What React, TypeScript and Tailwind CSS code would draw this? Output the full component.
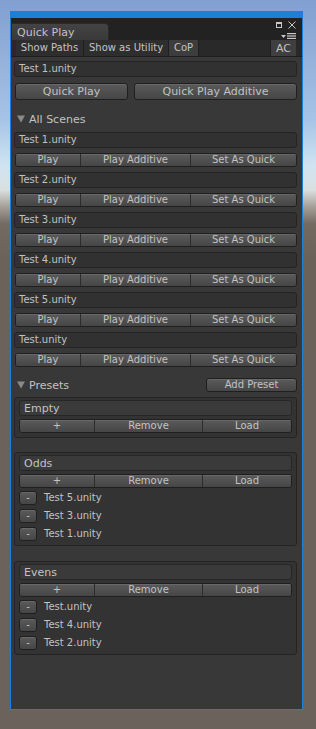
import React from "react";

const txt = "text-[#c2c2c2]";

function Btn({ children, className = "" }: { children?: React.ReactNode; className?: string }) {
  return (
    <div
      className={`flex items-center justify-center rounded-[3px] border border-[#1f1f1f] bg-gradient-to-b from-[#5a5a5a] to-[#464646] ${txt} text-[10px] leading-none shadow-[inset_0_1px_0_#686868] ${className}`}
    >
      {children}
    </div>
  );
}

function Seg({ items, widths, className = "" }: { items: string[]; widths: string[]; className?: string }) {
  return (
    <div className={`flex rounded-[3px] border border-[#1f1f1f] overflow-hidden ${className}`}>
      {items.map((it, i) => (
        <div
          key={i}
          className={`flex items-center justify-center bg-gradient-to-b from-[#5a5a5a] to-[#464646] shadow-[inset_0_1px_0_#686868] ${txt} text-[10px] leading-none ${i > 0 ? "border-l border-[#2c2c2c]" : ""} ${widths[i]}`}
        >
          {it}
        </div>
      ))}
    </div>
  );
}

function Field({ children, className = "" }: { children?: React.ReactNode; className?: string }) {
  return (
    <div className={`flex items-center rounded-[3px] border pl-[4px] ${txt} leading-none ${className}`}>
      {children}
    </div>
  );
}

function Tri() {
  return (
    <svg width="8" height="8" viewBox="0 0 8 8" className="block">
      <polygon points="0,0.5 8,0.5 4,7.5" fill="#8a8a8a" />
    </svg>
  );
}

function SceneRow({ name }: { name: string }) {
  return (
    <div className="flex flex-col">
      <Field className="ml-[3px] mr-[5px] h-[16px] text-[10px] border-[#232323] bg-[#313131]">{name}</Field>
      <Seg
        className="ml-[4px] mr-[5px] mt-[5px] mb-[5px] h-[14px]"
        items={["Play", "Play Additive", "Set As Quick"]}
        widths={["w-[64px]", "w-[110px]", "flex-1"]}
      />
    </div>
  );
}

function Preset({ name, items, className = "" }: { name: string; items: string[]; className?: string }) {
  return (
    <div
      className={`ml-[3px] mr-[5px] flex flex-col rounded-[3px] border border-[#232323] bg-[#333333] px-[4px] pt-[2px] pb-[4px] ${className}`}
    >
      <Field className="h-[16px] text-[11px] rounded-[2px] border-[#262626] bg-[#3a3a3a]">{name}</Field>
      <Seg
        className="mt-[3px] h-[14px]"
        items={["+", "Remove", "Load"]}
        widths={["w-[74px]", "w-[108px]", "flex-1"]}
      />
      {items.length > 0 && (
        <div className="mt-[3px] flex flex-col gap-[4px]">
          {items.map((it) => (
            <div key={it} className="flex items-center h-[14px]">
              <Btn className="w-[18px] h-[14px]">-</Btn>
              <span className={`ml-[7px] text-[10px] leading-none ${txt}`}>{it}</span>
            </div>
          ))}
        </div>
      )}
    </div>
  );
}

export default function App() {
  return (
    <div className="w-[316px] h-[729px] overflow-hidden pt-[11px] pl-[10px] font-['DejaVu_Sans',sans-serif] bg-[linear-gradient(180deg,#819fd0_0px,#a6c4e6_120px,#cfe4f2_165px,#dadfe0_190px,#a29b94_208px,#736a62_224px,#6b625a_260px,#6a625b_729px)]">
      <div className="w-[293px] h-[699px] flex flex-col border-x border-b border-t-[7px] border-[#1c7fdb] bg-[#383838]">
        {/* tab bar */}
        <div className="h-[22px] flex bg-[#222222]">
          <div className="ml-[1px] mt-[5px] h-[17px] w-[97px] flex items-center pl-[5px] rounded-tr-[4px] border-t border-r border-[#2a2a2a] bg-gradient-to-b from-[#434343] to-[#3a3a3a] text-[11px] leading-none text-[#c2c2c2]">
            Quick Play
          </div>
          <div className="ml-auto mr-[6px] mt-[3px] flex flex-col items-end">
            <div className="flex items-center gap-[6px]">
              <div className="w-[6px] h-[6px] border border-[#c8c8c8] border-t-[2px]" />
              <svg width="8" height="8" viewBox="0 0 8 8" className="block">
                <path d="M0.5 0.5 L7.5 7.5 M7.5 0.5 L0.5 7.5" stroke="#c8c8c8" strokeWidth="1" />
              </svg>
            </div>
            <div className="mt-[4px] flex items-center gap-[1px]">
              <svg width="5" height="3" viewBox="0 0 5 3" className="block">
                <polygon points="0,0 5,0 2.5,3" fill="#c8c8c8" />
              </svg>
              <svg width="9" height="6" viewBox="0 0 9 6" className="block">
                <rect x="0" y="0" width="9" height="1.2" fill="#c8c8c8" />
                <rect x="0" y="2.4" width="9" height="1.2" fill="#c8c8c8" />
                <rect x="0" y="4.8" width="9" height="1.2" fill="#c8c8c8" />
              </svg>
            </div>
          </div>
        </div>
        {/* toolbar */}
        <div className="h-[17px] flex bg-[#292929] border-b border-[#1e1e1e] text-[10px] leading-none text-[#c4c4c4]">
          <div className="w-[5px]" />
          <div className="w-[68px] flex items-center justify-center bg-[#2e2e2e] border-r border-[#1f1f1f]">Show Paths</div>
          <div className="w-[85px] flex items-center justify-center bg-[#2e2e2e] border-r border-[#1f1f1f]">Show as Utility</div>
          <div className="w-[30px] flex items-center justify-center bg-[#3d3d3d] border-r border-[#1f1f1f]">CoP</div>
          <div className="flex-1" />
          <div className="w-[26px] flex items-center justify-center bg-[#3f3f3f] border-l border-[#1f1f1f] text-[11px]">AC</div>
          <div className="w-[6px]" />
        </div>
        {/* content */}
        <div className="flex flex-col">
          <Field className="mt-[4px] ml-[3px] mr-[5px] h-[16px] text-[10px] border-[#232323] bg-[#313131]">Test 1.unity</Field>
          <div className="mt-[6px] ml-[4px] mr-[5px] flex gap-[6px]">
            <Btn className="w-[113px] h-[17px] text-[11px]">Quick Play</Btn>
            <Btn className="flex-1 h-[17px] text-[11px]">Quick Play Additive</Btn>
          </div>
          <div className="mt-[11px] h-[16px] flex items-center pl-[6px]">
            <Tri />
            <span className={`ml-[4px] text-[11px] leading-none ${txt}`}>All Scenes</span>
          </div>
          <div className="mt-[5px] flex flex-col">
            {["Test 1.unity", "Test 2.unity", "Test 3.unity", "Test 4.unity", "Test 5.unity", "Test.unity"].map((n) => (
              <SceneRow key={n} name={n} />
            ))}
          </div>
          <div className="mt-[5px] h-[16px] flex items-center pl-[6px] pr-[5px]">
            <Tri />
            <span className={`ml-[4px] text-[11px] leading-none ${txt}`}>Presets</span>
            <Btn className="ml-auto w-[91px] h-[14px]">Add Preset</Btn>
          </div>
          <Preset className="mt-[4px]" name="Empty" items={[]} />
          <Preset className="mt-[14px]" name="Odds" items={["Test 5.unity", "Test 3.unity", "Test 1.unity"]} />
          <Preset className="mt-[15px]" name="Evens" items={["Test.unity", "Test 4.unity", "Test 2.unity"]} />
        </div>
      </div>
    </div>
  );
}
